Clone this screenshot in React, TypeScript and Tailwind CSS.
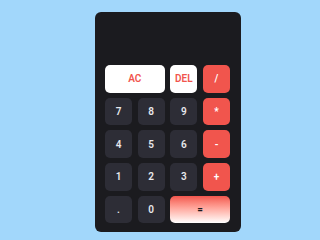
import { useState } from "react"

type Key = { label: string; kind: "num" | "op" | "light" | "eq"; span?: string }

const keys: Key[] = [
  { label: "AC", kind: "light", span: "col-span-2" },
  { label: "DEL", kind: "light" },
  { label: "/", kind: "op" },
  { label: "7", kind: "num" },
  { label: "8", kind: "num" },
  { label: "9", kind: "num" },
  { label: "*", kind: "op" },
  { label: "4", kind: "num" },
  { label: "5", kind: "num" },
  { label: "6", kind: "num" },
  { label: "-", kind: "op" },
  { label: "1", kind: "num" },
  { label: "2", kind: "num" },
  { label: "3", kind: "num" },
  { label: "+", kind: "op" },
  { label: ".", kind: "num" },
  { label: "0", kind: "num" },
  { label: "=", kind: "eq", span: "col-span-2" },
]

const styles = {
  num: "bg-[#2d2d36] text-[#e8e8ec]",
  op: "bg-[#f1554d] text-white",
  light: "bg-white text-[#f1554d]",
  eq: "bg-gradient-to-b from-[#f1554d] to-white text-[#1b1b1f]",
}

export default function App() {
  const [display, setDisplay] = useState("")

  const press = (k: string) => {
    if (k === "AC") return setDisplay("")
    if (k === "DEL") return setDisplay((d) => d.slice(0, -1))
    if (k === "=") {
      try {
        // eslint-disable-next-line no-eval
        setDisplay(String(eval(display)))
      } catch {
        setDisplay("")
      }
      return
    }
    setDisplay((d) => d + k)
  }

  return (
    <div className="min-h-screen w-full bg-[#a2d7fb] pt-[12px] pl-[95px] font-['Roboto',sans-serif]">
      <div className="w-[146px] h-[220px] rounded-[6px] bg-[#1b1b1f] pl-[10px] pr-[11px] flex flex-col">
        {/* Display */}
        <div className="h-[53px] flex items-end justify-end pb-2 text-white text-lg overflow-hidden">
          {display}
        </div>

        {/* Keypad */}
        <div className="grid grid-cols-4 auto-rows-[27.5px] gap-x-[5.7px] gap-y-[5.2px]">
          {keys.map((k) => (
            <button
              key={k.label}
              onClick={() => press(k.label)}
              className={`${styles[k.kind]} ${k.span ?? ""} rounded-[5px] text-[10px] font-semibold flex items-center justify-center`}
            >
              {k.label}
            </button>
          ))}
        </div>
      </div>
    </div>
  )
}
